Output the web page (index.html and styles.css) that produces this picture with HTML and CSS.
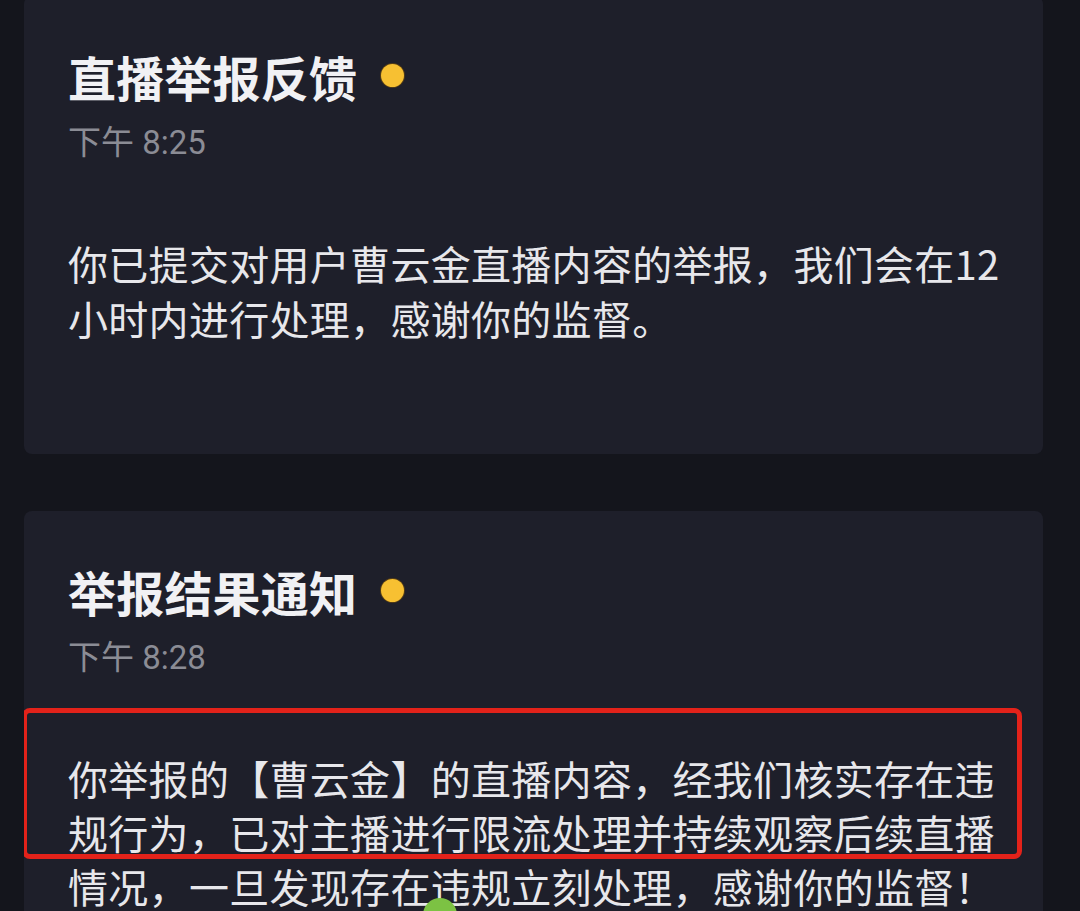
FILE: index.html
```html
<!DOCTYPE html>
<html lang="zh-CN">
<head>
<meta charset="utf-8">
<title>通知</title>
<link rel="stylesheet" href="styles.css">
</head>
<body>
<div class="page">
  <section class="card card-first">
    <div class="title-row">
      <h2 class="title">直播举报反馈</h2>
      <span class="dot"></span>
    </div>
    <div class="time">下午 8:25</div>
    <p class="body">你已提交对用户曹云金直播内容的举报，我们会在12小时内进行处理，感谢你的监督。</p>
  </section>
  <section class="card card-second">
    <div class="title-row">
      <h2 class="title">举报结果通知</h2>
      <span class="dot"></span>
    </div>
    <div class="time">下午 8:28</div>
    <p class="body">你举报的【曹云金】的直播内容，经我们核实存在违规行为，已对主播进行限流处理并持续观察后续直播情况，一旦发现存在违规立刻处理，感谢你的监督！</p>
    <div class="highlight"></div>
    <div class="green-blob"></div>
  </section>
</div>
</body>
</html>
```
FILE: styles.css
```css
html, body {
  margin: 0;
  padding: 0;
  background: #14151c;
  height: 911px;
  overflow: hidden;
}
body {
  font-family: "Noto Sans CJK SC", "Noto Sans", sans-serif;
}
.page {
  display: flex;
  flex-direction: column;
  gap: 57px;
  padding-left: 24px;
  width: 1019px;
  margin-top: -4px;
}
.card {
  position: relative;
  background: #1e1f2a;
  border-radius: 8px;
  padding: 52px 30px 0 44px;
  box-sizing: border-box;
}
.card-first {
  padding-bottom: 108px;
}
.card-second {
  height: 401px;
  overflow: hidden;
  border-radius: 8px 8px 0 0;
}
.title-row {
  display: flex;
  align-items: center;
  gap: 24px;
  height: 56px;
}
.title {
  margin: 0;
  font-size: 48px;
  font-weight: 700;
  line-height: 56px;
  color: #f1f1f4;
  letter-spacing: 0.2px;
}
.dot {
  width: 23px;
  height: 23px;
  border-radius: 50%;
  background: #f7c032;
  box-shadow: 0 0 0 1px rgba(120, 80, 10, 0.6);
  margin-top: -2px;
}
.time {
  margin-top: 19px;
  font-family: "Roboto", "Noto Sans CJK SC", sans-serif;
  font-size: 33px;
  line-height: 40px;
  color: #8b8c95;
}
.body {
  margin: 73px 0 0 0;
  width: 945px;
  font-size: 40px;
  line-height: 54px;
  letter-spacing: 0.3px;
  color: #e7e7eb;
}
.card-first .body {
  line-height: 55px;
}
.highlight {
  position: absolute;
  left: -2px;
  top: 197px;
  width: 1000px;
  height: 151px;
  box-sizing: border-box;
  border: 5px solid #e3221a;
  border-radius: 8px;
}
.green-blob {
  position: absolute;
  left: 399px;
  top: 387px;
  width: 34px;
  height: 34px;
  border-radius: 50%;
  background: #7cc243;
}
```
